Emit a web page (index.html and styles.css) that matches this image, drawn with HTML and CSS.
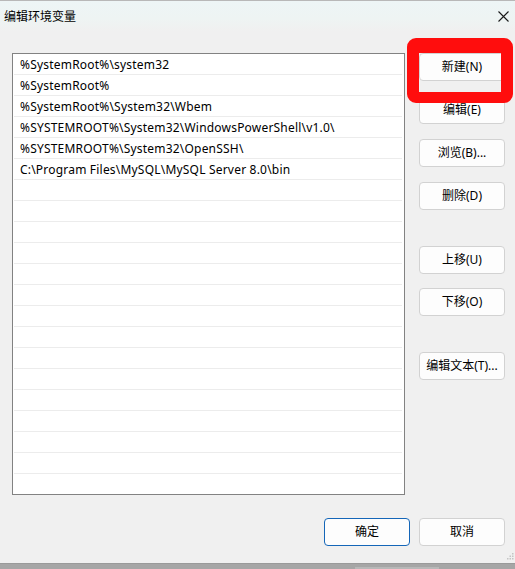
FILE: index.html
```html
<!DOCTYPE html>
<html lang="zh-CN">
<head>
<meta charset="utf-8">
<title>编辑环境变量</title>
<link rel="stylesheet" href="styles.css">
</head>
<body>
<div class="window">
  <div class="titlebar">
    <span class="title">编辑环境变量</span>
    <svg class="close" width="11" height="11" viewBox="0 0 11 11"><path d="M0.5 0.5 L10.5 10.5 M10.5 0.5 L0.5 10.5" stroke="#1a1a1a" stroke-width="1.1" fill="none"/></svg>
  </div>
  <div class="content">
    <div class="list">
      <div class="row">%SystemRoot%\system32</div>
      <div class="row">%SystemRoot%</div>
      <div class="row">%SystemRoot%\System32\Wbem</div>
      <div class="row">%SYSTEMROOT%\System32\WindowsPowerShell\v1.0\</div>
      <div class="row">%SYSTEMROOT%\System32\OpenSSH\</div>
      <div class="row">C:\Program Files\MySQL\MySQL Server 8.0\bin</div>
      <div class="row"></div><div class="row"></div><div class="row"></div><div class="row"></div>
      <div class="row"></div><div class="row"></div><div class="row"></div><div class="row"></div>
      <div class="row"></div><div class="row"></div><div class="row"></div><div class="row"></div>
      <div class="row"></div><div class="row"></div><div class="row"></div>
    </div>
    <div class="side">
      <button class="btn">新建(N)</button>
      <button class="btn">编辑(E)</button>
      <button class="btn">浏览(B)...</button>
      <button class="btn">删除(D)</button>
      <button class="btn sep">上移(U)</button>
      <button class="btn">下移(O)</button>
      <button class="btn sep">编辑文本(T)...</button>
    </div>
  </div>
  <div class="footer">
    <button class="btn primary">确定</button>
    <button class="btn">取消</button>
  </div>
  <svg class="grip" width="7" height="7" viewBox="0 0 7 7">
    <rect x="5" y="0" width="1.5" height="1.5" fill="#c4c4c4"/>
    <rect x="2.5" y="2.5" width="1.5" height="1.5" fill="#c4c4c4"/>
    <rect x="5" y="2.5" width="1.5" height="1.5" fill="#c4c4c4"/>
    <rect x="0" y="5" width="1.5" height="1.5" fill="#c4c4c4"/>
    <rect x="2.5" y="5" width="1.5" height="1.5" fill="#c4c4c4"/>
    <rect x="5" y="5" width="1.5" height="1.5" fill="#c4c4c4"/>
  </svg>
  <div class="highlight"></div>
</div>
<div class="strip"><div class="strip-item"></div></div>
</body>
</html>
```
FILE: styles.css
```css
* { box-sizing: border-box; }
html, body { margin: 0; padding: 0; }
body {
  width: 515px;
  height: 569px;
  overflow: hidden;
  background: #f0f0f0;
  font-family: "Noto Sans", "Noto Sans CJK SC", sans-serif;
  font-size: 12px;
  color: #000;
}
.window {
  position: relative;
  height: 563px;
  border-top: 1px solid #b8b8b8;
  background: #f0f0f0;
}
.titlebar {
  height: 30px;
  display: flex;
  align-items: center;
  justify-content: space-between;
  padding: 0 6px 0 4px;
  background: linear-gradient(180deg, #edf5f6 0%, #eef4f3 60%, #f0f0f0 100%);
}
.title {
  font-family: "Noto Sans CJK SC", sans-serif;
  font-size: 12px;
  line-height: 14px;
}
.close { margin-top: 1px; }
.content {
  display: flex;
  align-items: flex-start;
  padding: 22px 0 0 12px;
  gap: 14px;
}
.list {
  width: 393px;
  height: 442px;
  border: 1px solid #828282;
  background: #fff;
  overflow: hidden;
}
.row {
  height: 21px;
  line-height: 18px;
  padding-top: 2px;
  border-bottom: 1px solid #ececec;
  margin: 0 2px 0 1px;
  padding-left: 6px;
  white-space: nowrap;
  font-family: "Noto Sans", sans-serif;
  font-size: 12px;
  letter-spacing: 0.2px;
}
.side {
  display: flex;
  flex-direction: column;
  gap: 15px;
}
.btn {
  width: 86px;
  height: 28px;
  margin: 0;
  padding: 0;
  border: 1px solid #d2d2d2;
  border-radius: 4px;
  background: #fdfdfd;
  font-family: "Noto Sans", "Noto Sans CJK SC", sans-serif;
  font-size: 12px;
  color: #000;
  line-height: 26px;
}
.side .sep { margin-top: 21px; }
.side .btn:nth-child(6) { margin-top: -1px; }
.footer {
  display: flex;
  justify-content: flex-end;
  gap: 9px;
  padding: 23px 10px 0 0;
}
.primary { border-color: #1466b8; }
.grip {
  position: absolute;
  right: 1px;
  bottom: 3px;
}
.highlight {
  position: absolute;
  left: 407px;
  top: 37px;
  width: 106px;
  height: 65px;
  border: solid #ff0d0d;
  border-width: 15px 12px 11px 12px;
  border-radius: 9px;
}
.strip {
  height: 6px;
  background: #a6a6a6;
  border-top: 1px solid #9a9a9a;
  padding: 3px 0 0 355px;
}
.strip-item {
  width: 84px;
  height: 2px;
  background: #b8b8b8;
}
```
